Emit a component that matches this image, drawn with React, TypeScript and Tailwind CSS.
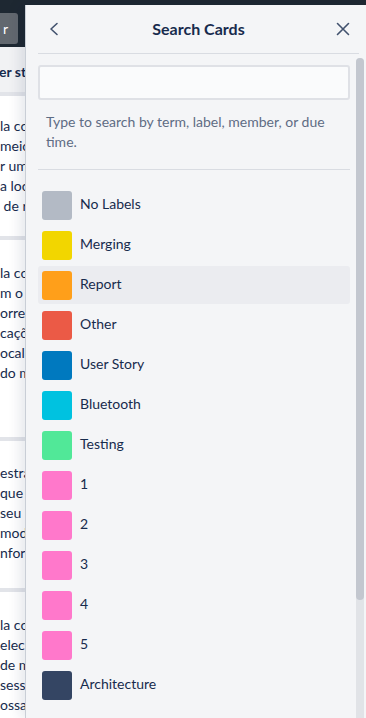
import React from "react";

const labels: { name: string; color: string }[] = [
  { name: "No Labels", color: "bg-[#b3bac5]" },
  { name: "Merging", color: "bg-[#f2d600]" },
  { name: "Report", color: "bg-[#ff9f1a]" },
  { name: "Other", color: "bg-[#eb5a46]" },
  { name: "User Story", color: "bg-[#0079bf]" },
  { name: "Bluetooth", color: "bg-[#00c2e0]" },
  { name: "Testing", color: "bg-[#51e898]" },
  { name: "1", color: "bg-[#ff78cb]" },
  { name: "2", color: "bg-[#ff78cb]" },
  { name: "3", color: "bg-[#ff78cb]" },
  { name: "4", color: "bg-[#ff78cb]" },
  { name: "5", color: "bg-[#ff78cb]" },
  { name: "Architecture", color: "bg-[#344563]" },
];

function Lines({ items }: { items: string[] }) {
  return (
    <>
      {items.map((t, i) => (
        <div key={i} className="h-[20px] leading-[20px] whitespace-nowrap">
          {t}
        </div>
      ))}
    </>
  );
}

export default function App() {
  return (
    <div
      className="flex h-[718px] w-[366px] overflow-hidden bg-[#1e2832] text-[14px] text-[#172b4d]"
      style={{ fontFamily: "Lato, 'Liberation Sans', sans-serif" }}
    >
      {/* board strip behind the panel */}
      <div className="flex w-[26px] shrink-0 flex-col overflow-hidden">
        <div className="h-[47px] shrink-0 bg-[#1e2832] pt-[13px]">
          <div className="h-[31px] w-[18px] rounded-r-[3px] bg-[#62686f] pl-[3px] leading-[31px] text-white">
            r
          </div>
        </div>
        <div className="flex flex-1 flex-col gap-[4px] bg-[#e2e4e9]">
          <div className="h-[45px] shrink-0 bg-[#f1f2f4] pt-[15px]">
            <div className="-ml-[1px] h-[20px] whitespace-nowrap font-bold leading-[20px]">er sto</div>
          </div>
          <div className="h-[140px] shrink-0 bg-white pt-[20px]">
            <Lines items={["la comp", "meio de", "r uma", "a loca", "\u00a0de re"]} />
          </div>
          <div className="h-[197px] shrink-0 bg-white pt-[23px]">
            <Lines items={["la comp", "m o us", "orrent", "cações", "ocal d", "do mo"]} />
          </div>
          <div className="h-[147px] shrink-0 bg-white pt-[22px]">
            <Lines items={["estrar", "que o", "seu m", "modo", "nform"]} />
          </div>
          <div className="flex-1 bg-white pt-[23px]">
            <Lines items={["la comp", "elecion", "de mo", "sessã", "ossam"]} />
          </div>
        </div>
      </div>

      {/* search panel */}
      <div className="relative mt-[5px] flex w-[340px] shrink-0 flex-col bg-[#f4f5f7] shadow-[-1px_0_0_#c9ced6,-6px_0_12px_rgba(9,30,66,0.10)]">
        <div className="ml-[12px] mr-[7px] flex h-[49px] shrink-0 items-center border-b border-[#d9dce2]">
          <div className="flex h-[32px] w-[32px] items-center justify-center">
            <svg width="12" height="14" viewBox="0 0 12 14" fill="none">
              <path d="M9 1.5 L3 7 L9 12.5" stroke="#42526e" strokeWidth="1.6" strokeLinecap="round" strokeLinejoin="round" />
            </svg>
          </div>
          <div className="flex-1 text-center text-[16px] font-bold leading-[20px] text-[#172b4d]">Search Cards</div>
          <div className="flex h-[32px] w-[32px] items-center justify-center">
            <svg width="14" height="14" viewBox="0 0 14 14" fill="none">
              <path d="M1.5 1.5 L12.5 12.5 M12.5 1.5 L1.5 12.5" stroke="#42526e" strokeWidth="1.6" strokeLinecap="round" />
            </svg>
          </div>
        </div>

        <div className="flex min-h-0 flex-1">
          <div className="min-w-0 flex-1 pl-[12px] pr-[6px] pt-[11px]">
            <div className="h-[35px] rounded-[3px] border-2 border-[#dfe1e6] bg-[#fafbfc]" />
            <div className="border-b border-[#d9dce2] px-[8px] pb-[17px] pt-[12px] leading-[20px] text-[#5e6c84]">
              Type to search by term, label, member, or due time.
            </div>
            <div className="flex flex-col gap-[2px] pt-[16px]">
              {labels.map((l) => (
                <div
                  key={l.name}
                  className={
                    "flex h-[38px] items-center gap-[8px] rounded-[3px] px-[4px] " +
                    (l.name === "Report" ? "bg-[#ebecf0]" : "")
                  }
                >
                  <div className={"h-[29px] w-[30px] shrink-0 rounded-[3px] " + l.color} />
                  <div className="-mt-[2px] leading-[20px] text-[#172b4d]">{l.name}</div>
                </div>
              ))}
            </div>
          </div>
          <div className="mt-[4px] flex w-[8px] shrink-0 flex-col rounded-t-[4px] bg-[#e1e3e7]">
            <div className="h-[542px] rounded-[4px] bg-[#c3c7cf]" />
          </div>
          <div className="w-[2px] shrink-0" />
        </div>
      </div>
    </div>
  );
}
